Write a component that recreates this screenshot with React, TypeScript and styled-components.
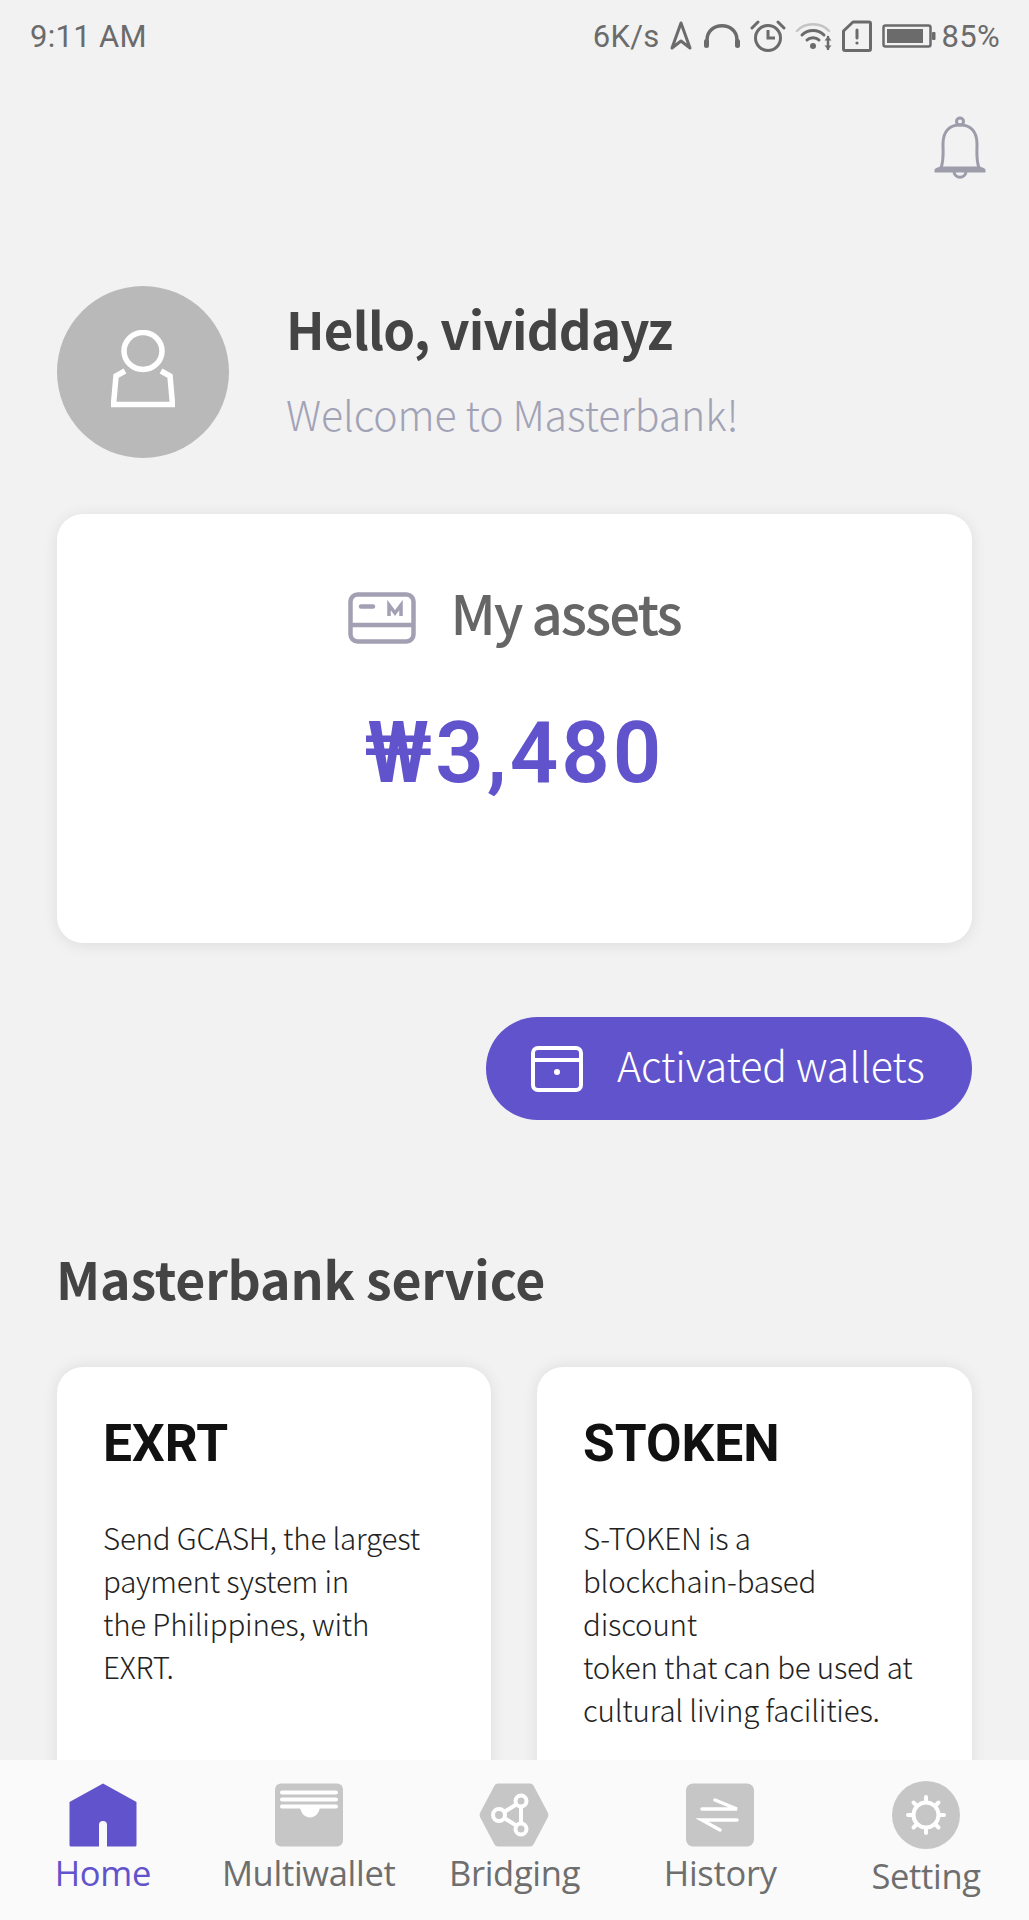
import React from "react";
import styled, { createGlobalStyle } from "styled-components";

const purple = "#6153cc";
const kr = `"Noto Sans CJK KR", "Noto Sans", sans-serif`;

const Global = createGlobalStyle`
  html, body { margin: 0; padding: 0; background: #f2f2f2; }
  * { box-sizing: border-box; }
`;

const Screen = styled.div`
  width: 1029px;
  height: 1920px;
  display: flex;
  flex-direction: column;
  overflow: hidden;
  background: #f2f2f2;
  font-family: ${kr};
`;
const Scroll = styled.main`
  flex: 1;
  min-height: 0;
  overflow: hidden;
`;
const StatusBar = styled.div`
  height: 72px;
  padding: 0 29px 0 30px;
  display: flex;
  align-items: center;
  justify-content: space-between;
  font-family: Roboto, sans-serif;
  font-size: 31px;
  letter-spacing: 0.3px;
  color: #6b6b6b;
`;
const StatusRight = styled.div`
  display: flex;
  align-items: center;
`;
const StatusText = styled.span<{ $left: number }>`
  margin-left: ${(p) => p.$left}px;
`;
const StatusIcon = styled.svg<{ $left: number }>`
  margin-left: ${(p) => p.$left}px;
  display: block;
`;
const BellRow = styled.div`
  display: flex;
  justify-content: flex-end;
  padding: 44px 42px 0 0;
`;
const Profile = styled.section`
  margin-top: 106px;
  padding-left: 57px;
  display: flex;
  align-items: center;
  gap: 57px;
`;
const Avatar = styled.div`
  width: 172px;
  height: 172px;
  border-radius: 50%;
  background: #b9b9b9;
  padding-bottom: 7px;
  display: flex;
  align-items: center;
  justify-content: center;
`;
const Greeting = styled.div`
  display: flex;
  flex-direction: column;
  gap: 27px;
  margin-bottom: 11px;
`;
const Hello = styled.div`
  font-size: 51px;
  line-height: 66px;
  font-weight: 700;
  letter-spacing: -0.8px;
  color: #444;
`;
const Welcome = styled.div`
  font-size: 41px;
  line-height: 50px;
  font-weight: 300;
  color: #a2a2b6;
  letter-spacing: -0.1px;
`;
const AssetCard = styled.section`
  margin: 56px 57px 0;
  height: 429px;
  border-radius: 26px;
  background: #fff;
  box-shadow: 0 2px 16px rgba(0, 0, 0, 0.09);
  padding-top: 74px;
  display: flex;
  flex-direction: column;
  align-items: center;
`;
const AssetHead = styled.div`
  display: flex;
  align-items: center;
  gap: 34px;
  height: 60px;
`;
const AssetTitle = styled.div`
  font-size: 54.5px;
  line-height: 70px;
  font-weight: 500;
  color: #666;
  letter-spacing: -2px;
  margin-top: -12px;
`;
const Amount = styled.div`
  margin-top: 50px;
  font-family: Roboto, sans-serif;
  font-size: 85px;
  line-height: 110px;
  font-weight: 600;
  letter-spacing: 3px;
  color: ${purple};
`;
const WalletRow = styled.div`
  display: flex;
  justify-content: flex-end;
  padding: 74px 57px 0 0;
`;
const WalletButton = styled.button`
  width: 486px;
  height: 103px;
  border: 0;
  border-radius: 52px;
  background: ${purple};
  color: #fff;
  display: flex;
  align-items: center;
  gap: 34px;
  padding: 0 0 0 45px;
  font-family: ${kr};
  font-size: 41px;
  font-weight: 300;
  letter-spacing: -0.1px;
`;
const WalletLabel = styled.span`
  margin-bottom: 9px;
`;
const SectionTitle = styled.h2`
  margin: 125px 0 0 56px;
  font-size: 51.8px;
  line-height: 66px;
  font-weight: 700;
  letter-spacing: -0.2px;
  color: #444;
`;
const ServiceGrid = styled.div`
  margin: 56px 57px 0;
  display: grid;
  grid-template-columns: 434px 435px;
  gap: 46px;
`;
const ServiceCard = styled.article`
  height: 480px;
  border-radius: 26px;
  background: #fff;
  box-shadow: 0 0 16px rgba(0, 0, 0, 0.09);
  padding: 47px 30px 0 46px;
`;
const ServiceTitle = styled.h3`
  margin: 0;
  font-family: Roboto, sans-serif;
  font-size: 51.5px;
  line-height: 60px;
  font-weight: 700;
  color: #111;
`;
const ServiceText = styled.p`
  margin: 42px 0 0;
  font-size: 29.5px;
  line-height: 43px;
  font-weight: 300;
  letter-spacing: -0.2px;
  color: #222;
`;
const Nav = styled.nav`
  height: 160px;
  flex: none;
  background: #fafafa;
  display: grid;
  grid-template-columns: repeat(5, 1fr);
  position: relative;
`;
const NavItem = styled.div<{ $round?: boolean; $active?: boolean }>`
  display: flex;
  flex-direction: column;
  align-items: center;
  padding-top: ${(p) => (p.$round ? 20 : 23)}px;
  gap: 3px;
  color: ${(p) => (p.$active ? purple : "#6e6e6e")};
  font-family: "Open Sans", sans-serif;
  font-size: 34.5px;
  line-height: 46px;
  letter-spacing: -0.3px;
`;
const NavSvg = styled.svg`
  display: block;
  flex: none;
`;

const Icon = (props: React.SVGProps<SVGSVGElement>) => (
  <svg fill="none" {...props} />
);

export default function App() {
  return (
    <Screen>
      <Global />
      <Scroll>
        <StatusBar>
          <span>9:11 AM</span>
          <StatusRight>
            <span>6K/s</span>
            <StatusIcon $left={10} width="22" height="30" viewBox="0 0 22 30" fill="none" stroke="#6b6b6b" strokeWidth="3" strokeLinejoin="round">
              <path d="M11 2 L20 27 L11 20 L2 27 Z" />
            </StatusIcon>
            <StatusIcon $left={11} width="38" height="28" viewBox="0 0 38 28" fill="none" stroke="#6b6b6b">
              <path d="M4 22 V18 C4 -1 34 -1 34 18 V22" strokeWidth="3.5" />
              <rect x="1" y="17" width="5" height="9" rx="2.5" fill="#6b6b6b" strokeWidth="0" />
              <rect x="32" y="17" width="5" height="9" rx="2.5" fill="#6b6b6b" strokeWidth="0" />
            </StatusIcon>
            <StatusIcon $left={9} width="36" height="32" viewBox="0 0 36 32" fill="none" stroke="#6b6b6b" strokeWidth="3">
              <circle cx="18" cy="18" r="12.5" />
              <path d="M18 10 V18 H25" />
              <path d="M2 8 L8 2 M34 8 L28 2" strokeLinecap="round" />
            </StatusIcon>
            <StatusIcon $left={9} width="38" height="28" viewBox="0 0 38 28" fill="none" strokeLinecap="round">
              <path d="M2 9 C10 0 26 0 34 9" stroke="#c4c4c4" strokeWidth="2.5" />
              <path d="M7 13 C13 7 23 7 29 13" stroke="#6b6b6b" strokeWidth="3" />
              <path d="M12 18 C15 15 21 15 24 18" stroke="#6b6b6b" strokeWidth="3" />
              <circle cx="18" cy="24" r="3" fill="#6b6b6b" />
              <path d="M33 15 V27" stroke="#6b6b6b" strokeWidth="2.5" />
              <path d="M29.5 18.5 L33 14.5 L36.5 18.5 Z M29.5 23.5 L33 27.5 L36.5 23.5 Z" fill="#6b6b6b" />
            </StatusIcon>
            <StatusIcon $left={9} width="30" height="32" viewBox="0 0 30 32" fill="none" stroke="#6b6b6b" strokeWidth="3" strokeLinejoin="round">
              <path d="M11 2 H27 a1.5 1.5 0 0 1 1.5 1.5 V29 a1.5 1.5 0 0 1 -1.5 1.5 H3 a1.5 1.5 0 0 1 -1.5 -1.5 V11 Z" />
              <path d="M15 10 V18" strokeLinecap="round" />
              <circle cx="15" cy="23" r="1.6" fill="#6b6b6b" strokeWidth="0" />
            </StatusIcon>
            <StatusIcon $left={10} width="54" height="24" viewBox="0 0 54 24" fill="none">
              <rect x="1.5" y="1.5" width="47" height="21" rx="2" stroke="#6b6b6b" strokeWidth="2.5" />
              <rect x="5" y="5" width="36" height="14" fill="#6b6b6b" />
              <rect x="50" y="8" width="3.5" height="8" rx="1" fill="#6b6b6b" />
            </StatusIcon>
            <StatusText $left={6}>85%</StatusText>
          </StatusRight>
        </StatusBar>

        <BellRow>
          <NavSvg width="54" height="64" viewBox="0 0 54 64" fill="none" stroke="#9c9cab" strokeWidth="3">
            <circle cx="27" cy="5.5" r="3.5" />
            <path d="M8 52 C11 44 10 38 10 28 C10 15 17 9 27 9 C37 9 44 15 44 28 C44 38 43 44 46 52" />
            <path d="M3 54 C4 53 5 53 8 52 H46 C49 53 50 53 51 54 V55 H3 Z" />
            <path d="M21 56 C22 63 32 63 33 56" />
          </NavSvg>
        </BellRow>

        <Profile>
          <Avatar>
            <Icon width="64" height="78" viewBox="0 0 64 78" stroke="#fff" strokeWidth="5.5">
              <ellipse cx="32" cy="21" rx="19" ry="18.5" />
              <path d="M14 41 L5 46 L2.5 74.5 H61.5 L59 46 L50 41" />
            </Icon>
          </Avatar>
          <Greeting>
            <Hello>Hello, vividdayz</Hello>
            <Welcome>Welcome to Masterbank!</Welcome>
          </Greeting>
        </Profile>

        <AssetCard>
          <AssetHead>
            <Icon width="68" height="52" viewBox="0 0 68 52" stroke="#a3a0b4" strokeWidth="4.5">
              <rect x="2.5" y="2.5" width="63" height="47" rx="7" />
              <path d="M2.5 33 H65.5" />
              <path d="M13 14.5 H25" strokeLinecap="round" />
              <path d="M41 24 V13 L47 21 L53 13 V24" strokeWidth="3.5" />
            </Icon>
            <AssetTitle>My assets</AssetTitle>
          </AssetHead>
          <Amount>₩3,480</Amount>
        </AssetCard>

        <WalletRow>
          <WalletButton>
            <Icon width="52" height="46" viewBox="0 0 52 46" stroke="#fff" strokeWidth="4">
              <rect x="2" y="2" width="48" height="42" rx="5" />
              <path d="M2 14 H50" />
              <circle cx="26" cy="26" r="3" fill="#fff" stroke="none" />
            </Icon>
            <WalletLabel>Activated wallets</WalletLabel>
          </WalletButton>
        </WalletRow>

        <SectionTitle>Masterbank service</SectionTitle>
        <ServiceGrid>
          <ServiceCard>
            <ServiceTitle>EXRT</ServiceTitle>
            <ServiceText>
              Send GCASH, the largest
              <br />
              payment system in
              <br />
              the Philippines, with
              <br />
              EXRT.
            </ServiceText>
          </ServiceCard>
          <ServiceCard>
            <ServiceTitle>STOKEN</ServiceTitle>
            <ServiceText>
              S-TOKEN is a
              <br />
              blockchain-based
              <br />
              discount
              <br />
              token that can be used at
              <br />
              cultural living facilities.
            </ServiceText>
          </ServiceCard>
        </ServiceGrid>
      </Scroll>

      <Nav>
        <NavItem $active>
          <NavSvg width="70" height="64" viewBox="0 0 70 64">
            <path d="M35 0.5 L68.5 19 V62 a1.5 1.5 0 0 1 -1.5 1.5 H39 V42 a4 4 0 0 0 -8 0 V63.5 H3 a1.5 1.5 0 0 1 -1.5 -1.5 V19 Z" fill={purple} />
          </NavSvg>
          Home
        </NavItem>
        <NavItem>
          <NavSvg width="70" height="64" viewBox="0 0 70 64">
            <rect x="1" y="0.5" width="68" height="63" rx="6" fill="#c6c6c6" />
            <path d="M8 9.5 H62 M8 16.5 H62 M8 23.5 H62" stroke="#fff" strokeWidth="4" strokeLinecap="round" />
            <path d="M26 24 C28 38 44 38 46 24 Z" fill="#fff" />
          </NavSvg>
          Multiwallet
        </NavItem>
        <NavItem>
          <NavSvg width="70" height="64" viewBox="0 0 70 64">
            <path d="M19 0.5 H51 a4 4 0 0 1 3.5 2 L68.5 29 a6 6 0 0 1 0 6 L54.5 61.5 a4 4 0 0 1 -3.5 2 H19 a4 4 0 0 1 -3.5 -2 L1.5 35 a6 6 0 0 1 0 -6 L15.5 2.5 a4 4 0 0 1 3.5 -2 Z" fill="#c6c6c6" />
            <g stroke="#fff" strokeWidth="4" fill="none">
              <path d="M25 29 L38 21 M25 35 L38 43 M42 22 V42" />
              <circle cx="20" cy="32" r="6" fill="#c6c6c6" />
              <circle cx="42" cy="18" r="5.5" fill="#c6c6c6" />
              <circle cx="42" cy="46" r="5.5" fill="#c6c6c6" />
            </g>
          </NavSvg>
          Bridging
        </NavItem>
        <NavItem>
          <NavSvg width="70" height="64" viewBox="0 0 70 64">
            <rect x="1" y="0.5" width="68" height="63" rx="7" fill="#c6c6c6" />
            <path d="M17 26 H52 L30 17 M52 37 H17 L35 47" stroke="#fff" strokeWidth="3.5" fill="none" strokeLinecap="round" />
          </NavSvg>
          History
        </NavItem>
        <NavItem $round>
          <NavSvg width="70" height="70" viewBox="0 0 70 70">
            <circle cx="35" cy="35" r="34" fill="#c6c6c6" />
            <circle cx="35" cy="35" r="12.5" fill="none" stroke="#fff" strokeWidth="4" />
            <path d="M35 17 V21 M35 49 V53 M17 35 H21 M49 35 H53 M22.5 22.5 L25.5 25.5 M44.5 44.5 L47.5 47.5 M47.5 22.5 L44.5 25.5 M25.5 44.5 L22.5 47.5" stroke="#fff" strokeWidth="4" strokeLinecap="round" />
          </NavSvg>
          Setting
        </NavItem>
      </Nav>
    </Screen>
  );
}
